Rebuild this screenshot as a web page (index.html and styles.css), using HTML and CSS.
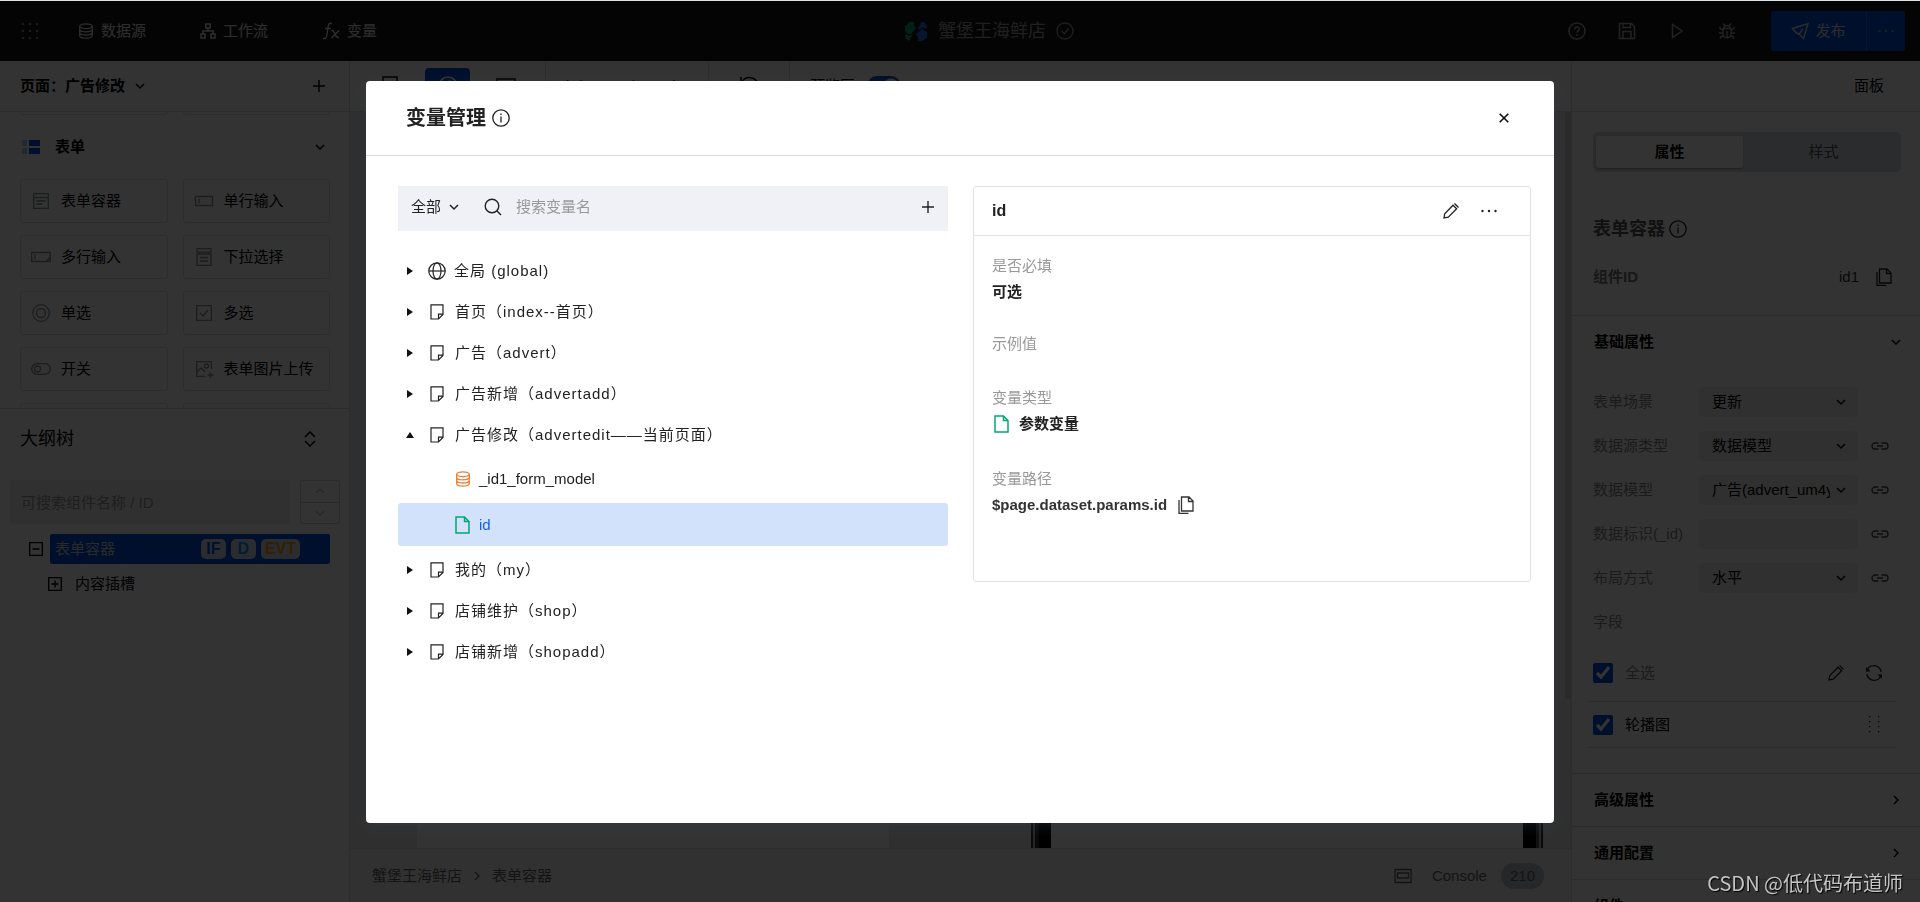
FILE: index.html
```html
<!DOCTYPE html>
<html lang="zh-CN">
<head>
<meta charset="utf-8">
<meta name="viewport" content="width=device-width, initial-scale=1">
<title>变量管理</title>
<link rel="stylesheet" href="styles.css">
</head>
<body>
<svg class="sprite" aria-hidden="true">
  <symbol id="grid" viewBox="0 0 18 18"><g fill="currentColor"><circle cx="2" cy="2" r="1.3"/><circle cx="9" cy="2" r="1.3"/><circle cx="16" cy="2" r="1.3"/><circle cx="2" cy="9" r="1.3"/><circle cx="9" cy="9" r="1.3"/><circle cx="16" cy="9" r="1.3"/><circle cx="2" cy="16" r="1.3"/><circle cx="9" cy="16" r="1.3"/><circle cx="16" cy="16" r="1.3"/></g></symbol>
  <symbol id="db" viewBox="0 0 16 16"><g fill="none" stroke="currentColor" stroke-width="1.3"><ellipse cx="8" cy="3.2" rx="6.3" ry="2.4"/><path d="M1.7 3.2v9.6c0 1.3 2.8 2.4 6.3 2.4s6.3-1.1 6.3-2.4V3.2M1.7 6.4c0 1.3 2.8 2.4 6.3 2.4s6.3-1.1 6.3-2.4M1.7 9.6c0 1.3 2.8 2.4 6.3 2.4s6.3-1.1 6.3-2.4"/></g></symbol>
  <symbol id="flow" viewBox="0 0 16 16"><g fill="none" stroke="currentColor" stroke-width="1.5"><path d="M5.8 1h4.4v4H5.8zM1 11h4v4H1zM11 11h4v4h-4zM8 5v3M3 11V8h10v3"/></g></symbol>
  <symbol id="fx" viewBox="0 0 18 18"><g fill="none" stroke="currentColor" stroke-width="1.4"><path d="M10 1.5C7.500 .5 6.600 2 6.300 4L4.700 14c-.3 2-1.500 3-3.700 2.300M3 6.500h6M9.500 8.500c2-.5 2.500 1 3.500 3.500s1.500 4 4 3.500M17 8.500l-7.500 7.500"/></g></symbol>
  <symbol id="check-circle" viewBox="0 0 18 18"><g fill="none" stroke="currentColor" stroke-width="1.3"><circle cx="9" cy="9" r="8"/><path d="M5.500 9l2.700 2.700L12.800 6.500"/></g></symbol>
  <symbol id="help" viewBox="0 0 18 18"><g fill="none" stroke="currentColor" stroke-width="1.5"><circle cx="9" cy="9" r="8"/><path d="M6.700 7.200c0-3 4.600-3 4.600-.2C11.300 8.800 9 8.800 9 10.800M9 12v1.700"/></g></symbol>
  <symbol id="save" viewBox="0 0 18 18"><g fill="none" stroke="currentColor" stroke-width="1.5"><path d="M1.500 1.500h12l3 3v12h-15zM5 1.500v4h7.500v-4M5 16.500V9.500h8v7"/></g></symbol>
  <symbol id="play" viewBox="0 0 18 18"><path d="M4.500 2.500v13L14 9z" fill="none" stroke="currentColor" stroke-width="1.5"/></symbol>
  <symbol id="bug" viewBox="0 0 18 18"><g fill="none" stroke="currentColor" stroke-width="1.4"><path d="M5 6.500h8v5.500c0 5-8 5-8 0zM6 6.500c0-4 6-4 6 0M9 9v7M6.500 3.500L5 1.500M11.500 3.500L13 1.500M5 8.500L2 6.500V4.500M13 8.500l3-2V4.500M5 11H1M13 11h4M5.500 13.500l-3 1.500v2M12.500 13.500l3 1.500v2"/></g></symbol>
  <symbol id="send" viewBox="0 0 18 18"><g fill="none" stroke="currentColor" stroke-width="1.4"><path d="M1.500 6.500L17 1.500 12.500 16.500 8.500 12.500 5.500 11zM8 12l4-5"/></g></symbol>
  <symbol id="dots" viewBox="0 0 18 18"><g fill="currentColor"><circle cx="2.500" cy="9" r="1.200"/><circle cx="9" cy="9" r="1.200"/><circle cx="15.500" cy="9" r="1.200"/></g></symbol>
  <symbol id="down" viewBox="0 0 10 10"><path d="M1 3l4 4 4-4" fill="none" stroke="currentColor" stroke-width="1.500"/></symbol>
  <symbol id="up" viewBox="0 0 10 10"><path d="M1 7l4-4 4 4" fill="none" stroke="currentColor" stroke-width="1.300"/></symbol>
  <symbol id="right" viewBox="0 0 10 10"><path d="M3 1l4 4-4 4" fill="none" stroke="currentColor" stroke-width="1.400"/></symbol>
  <symbol id="plus" viewBox="0 0 12 12"><path d="M6 0v12M0 6h12" fill="none" stroke="currentColor" stroke-width="1.400"/></symbol>
  <symbol id="form" viewBox="0 0 20 18"><g fill="none" stroke="currentColor" stroke-width="1.300"><path d="M2.700 1.700h14.600v14.600H2.700zM2.700 5.500h14.600M5.500 9h9M5.500 12h6"/></g></symbol>
  <symbol id="field" viewBox="0 0 20 18"><path d="M1.500 4.500h17v9h-17zM5 6.500v5" fill="none" stroke="currentColor" stroke-width="1.300"/></symbol>
  <symbol id="area" viewBox="0 0 20 18"><path d="M.7 4.500h18.600v9H.7zM4 6.500v5M19 9.500l-4 4h4z" fill="none" stroke="currentColor" stroke-width="1.300"/></symbol>
  <symbol id="select" viewBox="0 0 20 18"><path d="M3 .7h14v3.500H3zM3 6h14v11.300H3zM6 9.500h8M6 13h8" fill="none" stroke="currentColor" stroke-width="1.300"/></symbol>
  <symbol id="radio" viewBox="0 0 20 18"><g fill="none" stroke="currentColor" stroke-width="1.300"><circle cx="10" cy="9" r="8.300"/><circle cx="10" cy="9" r="4.500"/></g></symbol>
  <symbol id="checkbox" viewBox="0 0 20 18"><path d="M2.700 1.700h14.600v14.600H2.700zM6 9l3 3 5-6" fill="none" stroke="currentColor" stroke-width="1.300"/></symbol>
  <symbol id="toggle" viewBox="0 0 20 18"><g fill="none" stroke="currentColor" stroke-width="1.300"><rect x=".7" y="3.700" width="18.600" height="10.600" rx="5.300"/><circle cx="6.500" cy="9" r="3"/></g></symbol>
  <symbol id="image" viewBox="0 0 20 18"><g fill="none" stroke="currentColor" stroke-width="1.300"><path d="M17.300 9V1.700H2.700v14.600h8M3 12l4-4 4 4M16.500 12v6M13.500 15h6"/><circle cx="12.500" cy="6" r="2"/></g></symbol>
  <symbol id="updown" viewBox="0 0 12 16"><path d="M1 6l5-5 5 5M1 10l5 5 5-5" fill="none" stroke="currentColor" stroke-width="1.500"/></symbol>
  <symbol id="minus-box" viewBox="0 0 14 14"><path d="M.7.7h12.600v12.600H.7zM3.500 7h7" fill="none" stroke="currentColor" stroke-width="1.300"/></symbol>
  <symbol id="plus-box" viewBox="0 0 14 14"><path d="M.7.7h12.600v12.600H.7zM3.500 7h7M7 3.500v7" fill="none" stroke="currentColor" stroke-width="1.300"/></symbol>
  <symbol id="info" viewBox="0 0 18 18"><g fill="none" stroke="currentColor" stroke-width="1.300"><circle cx="9" cy="9" r="8.200"/><path d="M9 7.500v6M9 4.500v1.600"/></g></symbol>
  <symbol id="copy" viewBox="0 0 18 18"><path d="M4.500 1h7.500l4 4v10H4.500zM11.500 1v4.500H16M2 4v13.300h9.500" fill="none" stroke="currentColor" stroke-width="1.300"/></symbol>
  <symbol id="link" viewBox="0 0 18 18"><path d="M7.500 6H4a3 3 0 000 6h3.500M10.500 6H14a3 3 0 010 6h-3.500M6 9h6" fill="none" stroke="currentColor" stroke-width="1.300"/></symbol>
  <symbol id="edit" viewBox="0 0 18 18"><path d="M2 16l.7-4.300L11 3.200l3.600 3.600-8.300 8.400zM12.500 1.500l4 4" fill="none" stroke="currentColor" stroke-width="1.300"/></symbol>
  <symbol id="refresh" viewBox="0 0 18 18"><g fill="none" stroke="currentColor" stroke-width="1.300"><path d="M2 7.500C3.500-.2 14-.5 16.300 8M16 10.500C14.500 18.200 4 18.500 1.700 10"/><path d="M1 3V7.500H5.500zM17 15V10.500H12.500z" fill="currentColor" stroke="none"/></g></symbol>
  <symbol id="grip" viewBox="0 0 12 18"><g fill="currentColor"><path d="M1 0h1.300v1.300H1zM10 0h1.300v1.300H10zM1 5h1.300v1.300H1zM10 5h1.300v1.300H10zM1 10h1.300v1.300H1zM10 10h1.300v1.300H10zM1 15h1.300v1.300H1zM10 15h1.300v1.300H10z"/></g></symbol>
  <symbol id="search" viewBox="0 0 18 18"><g fill="none" stroke="currentColor" stroke-width="1.400"><circle cx="8" cy="8" r="6.800"/><path d="M12.800 12.800l4.200 4.200"/></g></symbol>
  <symbol id="close" viewBox="0 0 10 10"><path d="M.7.7l8.600 8.600M9.300.7L.7 9.300" fill="none" stroke="currentColor" stroke-width="1.600"/></symbol>
  <symbol id="globe" viewBox="0 0 18 18"><g fill="none" stroke="currentColor" stroke-width="1.200"><circle cx="9" cy="9" r="8.200"/><ellipse cx="9" cy="9" rx="4" ry="8.200"/><path d="M.8 9h16.400"/></g></symbol>
  <symbol id="page" viewBox="0 0 14 16"><path d="M1 .8h12v9.700L8.500 15H1zM13 10.200H8.500V15" fill="none" stroke="currentColor" stroke-width="1.200"/></symbol>
  <symbol id="file" viewBox="0 0 15 18"><path d="M1 1h8.500L14 5.500V17H1zM9.500 1v4.500H14" fill="none" stroke="currentColor" stroke-width="1.500"/></symbol>
  <symbol id="window" viewBox="0 0 18 16"><path d="M1 1.500h16v13H1zM3.500 5h11v5h-11z" fill="none" stroke="currentColor" stroke-width="1.300"/></symbol>
</svg>

<div class="app">
  <header class="topbar">
    <button class="plain apps" aria-label="应用"><svg class="i18"><use href="#grid"/></svg></button>
    <nav class="topnav">
      <a href="#"><svg class="i16"><use href="#db"/></svg>数据源</a>
      <a href="#"><svg class="i16"><use href="#flow"/></svg>工作流</a>
      <a href="#"><svg class="i18"><use href="#fx"/></svg>变量</a>
    </nav>
    <div class="app-name">
      <svg class="logo" viewBox="0 0 24 20"><path d="M1 5l5-4h4v4l2 2-5 6H4L1 10z" fill="#00a870"/><path d="M1 13l4 2 4-2-4 7-4-3z" fill="#00a870"/><path d="M14 7l4-6h2l3 4v3l-4-2-4 3z" fill="#266fe8"/><path d="M12 13l6-5 5 3v6l-5 3h-4v-4z" fill="#266fe8"/></svg>
      <span>蟹堡王海鲜店</span>
      <svg class="i18"><use href="#check-circle"/></svg>
    </div>
    <div class="actions">
      <button class="plain" aria-label="帮助"><svg class="i18"><use href="#help"/></svg></button>
      <button class="plain" aria-label="保存"><svg class="i18"><use href="#save"/></svg></button>
      <button class="plain" aria-label="预览"><svg class="i18"><use href="#play"/></svg></button>
      <button class="plain" aria-label="调试"><svg class="i18"><use href="#bug"/></svg></button>
      <div class="publish">
        <button class="publish-main"><svg class="i18"><use href="#send"/></svg>发布</button>
        <button class="publish-more" aria-label="更多"><svg class="i18"><use href="#dots"/></svg></button>
      </div>
    </div>
  </header>

  <div class="workspace">
    <aside class="left">
      <div class="page-head">
        <button class="plain strong">页面：广告修改<svg class="i10"><use href="#down"/></svg></button>
        <button class="plain" aria-label="新建页面"><svg class="i12"><use href="#plus"/></svg></button>
      </div>
      <section class="palette">
        <div class="stub-row"><i></i><i></i></div>
        <h2 class="palette-title">
          <svg class="i18" viewBox="0 0 18 18"><path d="M0 2h5v6H0zM0 10h5v6H0z" fill="#b5c7f0"/><path d="M7 2h11v6H7zM7 10h11v6H7z" fill="#0052d9"/></svg>
          表单<svg class="i10"><use href="#down"/></svg>
        </h2>
        <div class="cards">
          <button><svg class="i20"><use href="#form"/></svg>表单容器</button>
          <button><svg class="i20"><use href="#field"/></svg>单行输入</button>
          <button><svg class="i20"><use href="#area"/></svg>多行输入</button>
          <button><svg class="i20"><use href="#select"/></svg>下拉选择</button>
          <button><svg class="i20"><use href="#radio"/></svg>单选</button>
          <button><svg class="i20"><use href="#checkbox"/></svg>多选</button>
          <button><svg class="i20"><use href="#toggle"/></svg>开关</button>
          <button><svg class="i20"><use href="#image"/></svg>表单图片上传</button>
          <i></i><i></i>
        </div>
      </section>
      <section class="outline">
        <div class="outline-head"><h2>大纲树</h2><button class="plain" aria-label="展开"><svg class="updown"><use href="#updown"/></svg></button></div>
        <div class="outline-search">
          <input type="text" placeholder="可搜索组件名称 / ID" aria-label="可搜索组件名称 / ID">
          <div class="stepper"><button aria-label="上一个"><svg class="i10"><use href="#up"/></svg></button><button aria-label="下一个"><svg class="i10"><use href="#down"/></svg></button></div>
        </div>
        <div class="node">
          <svg class="i14"><use href="#minus-box"/></svg>
          <div class="node-body"><span>表单容器</span><span class="tags"><b class="tag-if">IF</b><b class="tag-d">D</b><b class="tag-evt">EVT</b></span></div>
        </div>
        <div class="node child"><svg class="i14"><use href="#plus-box"/></svg><span>内容插槽</span></div>
      </section>
    </aside>

    <main class="center">
      <div class="toolbar">
        <div class="devices">
          <button aria-label="手机"><svg class="device" viewBox="0 0 20 20"><rect x="3" y="1" width="14" height="18" fill="none" stroke="currentColor" stroke-width="1.500"/></svg></button>
          <button class="on" aria-label="小程序"><svg class="device" viewBox="0 0 20 20"><g fill="none" stroke="currentColor" stroke-width="1.500"><circle cx="10" cy="10" r="9"/><path d="M10 13V7c0-3 5-2 4 1"/></g></svg></button>
          <button aria-label="电脑"><svg class="device" viewBox="0 0 20 20"><rect x="1" y="3" width="18" height="12" fill="none" stroke="currentColor" stroke-width="1.500"/></svg></button>
        </div>
        <div class="zoom-level">iPhone 8 (100%)</div>
        <div class="reload"><svg class="device" viewBox="0 0 20 20"><path d="M2 6c4-7 14-5 16 2M1 1v6h6" fill="none" stroke="currentColor" stroke-width="1.500"/></svg></div>
        <div class="preview"><label for="preview">预览区</label><input id="preview" class="switch" type="checkbox" role="switch" checked></div>
      </div>
      <div class="canvas">
        <div class="artboard"></div>
        <div class="phone"><div class="screen"></div></div>
        <div class="scroll"></div>
      </div>
      <footer class="statusbar">
        <span>蟹堡王海鲜店</span><svg class="i10"><use href="#right"/></svg><span>表单容器</span>
        <div class="console"><svg class="win"><use href="#window"/></svg><span>Console</span><b>210</b></div>
      </footer>
    </main>

    <aside class="right">
      <div class="panel-head">面板</div>
      <div class="panel-top">
        <div class="tabs" role="tablist"><button class="on" role="tab">属性</button><button role="tab">样式</button></div>
        <h2>表单容器<svg class="i18"><use href="#info"/></svg></h2>
        <div class="cid"><span>组件ID</span><span class="cid-value">id1</span><svg class="i18"><use href="#copy"/></svg></div>
      </div>
      <h3 class="group">基础属性<svg class="i10"><use href="#down"/></svg></h3>
      <div class="props">
        <div class="prop"><label for="p1">表单场景</label><span class="pick"><select id="p1"><option>更新</option></select><svg class="i10"><use href="#down"/></svg></span></div>
        <div class="prop"><label for="p2">数据源类型</label><span class="pick"><select id="p2"><option>数据模型</option></select><svg class="i10"><use href="#down"/></svg></span><svg class="i18"><use href="#link"/></svg></div>
        <div class="prop"><label for="p3">数据模型</label><span class="pick"><select id="p3"><option>广告(advert_um4y)</option></select><svg class="i10"><use href="#down"/></svg></span><svg class="i18"><use href="#link"/></svg></div>
        <div class="prop"><label for="p4">数据标识(_id)</label><span class="pick"><input id="p4" type="text"></span><svg class="i18"><use href="#link"/></svg></div>
        <div class="prop"><label for="p5">布局方式</label><span class="pick"><select id="p5"><option>水平</option></select><svg class="i10"><use href="#down"/></svg></span><svg class="i18"><use href="#link"/></svg></div>
        <div class="prop"><span class="muted">字段</span></div>
      </div>
      <div class="fields">
        <div class="field-row all"><input type="checkbox" id="f0" checked><label for="f0">全选</label><svg class="i18"><use href="#edit"/></svg><svg class="i18"><use href="#refresh"/></svg></div>
        <div class="field-row"><input type="checkbox" id="f1" checked><label for="f1">轮播图</label><svg class="grip"><use href="#grip"/></svg></div>
      </div>
      <h3 class="group">高级属性<svg class="i10"><use href="#right"/></svg></h3>
      <h3 class="group">通用配置<svg class="i10"><use href="#right"/></svg></h3>
      <h3 class="group">组件</h3>
    </aside>
  </div>
</div>

<div class="backdrop">
  <div class="dialog" role="dialog" aria-modal="true" aria-labelledby="dialog-title">
    <div class="dialog-head">
      <h1 id="dialog-title">变量管理</h1><svg class="i18"><use href="#info"/></svg>
      <button class="plain close" aria-label="关闭"><svg class="i10"><use href="#close"/></svg></button>
    </div>
    <div class="dialog-body">
      <div class="variables">
        <div class="filter">
          <span class="scope"><select aria-label="范围"><option>全部</option></select><svg class="i10"><use href="#down"/></svg></span>
          <svg class="i18"><use href="#search"/></svg>
          <input type="text" placeholder="搜索变量名" aria-label="搜索变量名">
          <button class="plain" aria-label="新增变量"><svg class="i12"><use href="#plus"/></svg></button>
        </div>
        <ul class="tree">
          <li><button><i class="arrow"></i><svg class="i18"><use href="#globe"/></svg>全局 (global)</button></li>
          <li><button><i class="arrow"></i><svg class="page"><use href="#page"/></svg>首页（index--首页）</button></li>
          <li><button><i class="arrow"></i><svg class="page"><use href="#page"/></svg>广告（advert）</button></li>
          <li><button><i class="arrow"></i><svg class="page"><use href="#page"/></svg>广告新增（advertadd）</button></li>
          <li><button><i class="arrow open"></i><svg class="page"><use href="#page"/></svg>广告修改（advertedit——当前页面）</button>
            <ul>
              <li><button><svg class="i16 orange"><use href="#db"/></svg>_id1_form_model</button></li>
              <li><button class="selected"><svg class="file"><use href="#file"/></svg>id</button></li>
            </ul>
          </li>
          <li><button><i class="arrow"></i><svg class="page"><use href="#page"/></svg>我的（my）</button></li>
          <li><button><i class="arrow"></i><svg class="page"><use href="#page"/></svg>店铺维护（shop）</button></li>
          <li><button><i class="arrow"></i><svg class="page"><use href="#page"/></svg>店铺新增（shopadd）</button></li>
        </ul>
      </div>
      <section class="detail">
        <div class="detail-head"><h2>id</h2><button class="plain" aria-label="编辑"><svg class="i18"><use href="#edit"/></svg></button><button class="plain" aria-label="更多"><svg class="i18"><use href="#dots"/></svg></button></div>
        <dl>
          <div><dt>是否必填</dt><dd>可选</dd></div>
          <div><dt>示例值</dt><dd></dd></div>
          <div><dt>变量类型</dt><dd><svg class="file"><use href="#file"/></svg>参数变量</dd></div>
          <div><dt>变量路径</dt><dd class="path">$page.dataset.params.id<svg class="i18"><use href="#copy"/></svg></dd></div>
        </dl>
      </section>
    </div>
  </div>
</div>
<div class="credit">CSDN @低代码布道师</div>
</body>
</html>
```
FILE: styles.css
```css
* { box-sizing: border-box; }
html, body { height: 100%; }
body { margin: 0; overflow: hidden; background: #fff; color: #000; font: 15px/24px "Liberation Sans", "Noto Sans CJK SC", sans-serif; }
button, input, select { font: inherit; color: inherit; }
button { cursor: pointer; }
h1, h2, h3, dl, dd, ul { margin: 0; padding: 0; }
ul { list-style: none; }
svg { display: block; flex: none; }
input::placeholder { color: #999; opacity: 1; }
.sprite { display: none; }
.plain { display: flex; align-items: center; padding: 0; border: 0; background: none; }
.strong { font-weight: 700; }
.i10 { width: 10px; height: 10px; }
.i12 { width: 12px; height: 12px; }
.i14 { width: 14px; height: 14px; }
.i16 { width: 16px; height: 16px; }
.i18 { width: 18px; height: 18px; }
.i20 { width: 20px; height: 18px; }

.app { display: flex; flex-direction: column; height: 100vh; border-top: 1px solid #dfe3e3; }

/* Top bar */
.topbar { display: grid; grid-template-columns: 1fr auto 1fr; align-items: center; flex: none; height: 60px; padding: 0 15px 0 21px; background: #181818; color: #fff; grid-template-areas: "nav name actions"; }
.apps { grid-area: nav; justify-self: start; color: #888; }
.topnav { grid-area: nav; display: flex; gap: 54px; margin-left: 57px; }
.topnav a { display: flex; align-items: center; gap: 7px; color: #e2e2e2; text-decoration: none; }
.app-name { grid-area: name; display: flex; align-items: center; gap: 10px; margin-left: 52px; font-size: 18px; color: #999; }
.logo { width: 24px; height: 20px; }
.actions { grid-area: actions; display: flex; align-items: center; justify-content: flex-end; gap: 32px; color: #aaa; }
.publish { display: flex; height: 40px; margin-left: 3px; border-radius: 3px; overflow: hidden; }
.publish button { display: flex; align-items: center; justify-content: center; gap: 6px; border: 0; background: #0052d9; color: #ddd; }
.publish-main { width: 95px; }
.publish .publish-more { width: 39px; border-left: 1px solid #2a6ee8; color: #999; }

.workspace { display: grid; grid-template-columns: 349px minmax(0, 1fr) 349px; flex: 1; min-height: 0; }

/* Component palette and outline */
.left { display: flex; flex-direction: column; min-height: 0; }
.page-head { display: flex; align-items: center; justify-content: space-between; height: 51px; padding: 0 24px 0 20px; border-bottom: 1px solid #dcdcdc; }
.page-head .plain { gap: 10px; }
.palette { height: 297px; overflow: hidden; padding: 0 19px 0 20px; border-bottom: 1px solid #d0d0d0; }
.stub-row, .cards { display: grid; grid-template-columns: 1fr 1fr; gap: 12px 15px; }
.stub-row i { height: 3px; border: solid #dcdcdc; border-width: 0 1px 1px; border-radius: 0 0 3px 3px; }
.palette-title { display: flex; align-items: center; gap: 15px; height: 64px; padding: 0 5px 0 2px; font-size: 15px; }
.palette-title .i10 { margin-left: auto; }
.cards button, .cards i { display: flex; align-items: center; gap: 10px; height: 44px; padding: 0 10px; border: 1px solid #dcdcdc; border-radius: 3px; background: none; white-space: nowrap; }
.cards svg { color: #8a8f99; }
.outline-head { display: flex; align-items: center; justify-content: space-between; height: 60px; padding: 0 33px 0 20px; }
.outline-head h2 { font-size: 18px; font-weight: 400; }
.updown { width: 12px; height: 16px; }
.outline-search { display: flex; gap: 10px; padding: 11px 9px 0 10px; }
.outline-search input { flex: 1; min-width: 0; height: 44px; padding: 0 11px; border: 0; border-radius: 4px; background: #eee; }
.stepper { display: grid; width: 40px; border: 1px solid #d0d0d0; border-radius: 2px; color: #c4c4c4; }
.stepper button { display: grid; place-items: center; padding: 0; border: 0; background: none; }
.stepper button + button { border-top: 1px solid #d0d0d0; }
.node { display: flex; align-items: center; gap: 7px; height: 30px; margin-top: 10px; padding: 0 19px 0 29px; }
.node-body { display: flex; flex: 1; align-items: center; justify-content: space-between; height: 30px; padding: 0 30px 0 5px; border-radius: 2px; background: #0052d9; color: #ccc; }
.tags { display: flex; gap: 5px; }
.tags b { min-width: 25px; padding: 0 4px; border-radius: 5px; background: #d8dde8; font-size: 16px; line-height: 20px; text-align: center; }
.tag-if { color: #0052d9; }
.tag-d { color: #0594fa; }
.tag-evt { color: #ff9d00; }
.child { gap: 13px; margin-top: 5px; padding-left: 48px; }

/* Canvas */
.center { display: flex; flex-direction: column; min-width: 0; border-left: 1px solid #dcdcdc; }
.toolbar { display: flex; flex: none; height: 51px; border-bottom: 1px solid #dcdcdc; }
.toolbar > div { display: flex; align-items: center; border-right: 1px solid #dcdcdc; }
.toolbar .preview { border: 0; gap: 12px; padding-left: 20px; }
.devices { gap: 13px; width: 196px; padding-left: 17px; }
.devices button { display: grid; place-items: center; width: 45px; height: 36px; padding: 0; border: 0; border-radius: 4px; background: none; }
.devices .on { background: #0052d9; color: #fff; }
.device { width: 20px; height: 20px; }
.zoom-level { width: 163px; padding-left: 20px; }
.reload { width: 81px; padding-left: 31px; }
.switch { appearance: none; width: 34px; height: 20px; margin: 0; border-radius: 10px; background: radial-gradient(circle at 24px 10px, #fff 7px, #0052d9 8px); }
.canvas { display: flex; flex: 1; min-height: 0; padding-left: 67px; background: #e8e8ea; }
.artboard { width: 472px; background: #fff; }
.phone { width: 512px; margin-left: 142px; padding: 0 20px; background: linear-gradient(90deg, #333 0 2px, #bbb 2px 4px, #333 4px 8px, #000 8px 20px, #fff 20px 492px, #000 492px 505px, #555 505px 508px, #bbb 508px 510px, #333 510px); }
.screen { height: 100%; background: #fff; }
.scroll { width: 6px; height: 587px; margin-left: auto; border-radius: 3px; background: #cfcfcf; }
.statusbar { display: flex; flex: none; align-items: center; gap: 10px; height: 54px; padding: 0 27px 0 22px; border-top: 1px solid #dcdcdc; background: #f5f5f5; color: #666; }
.console { display: flex; align-items: center; gap: 14px; margin-left: auto; }
.console span { margin-left: 6px; }
.console b { padding: 0 9px; border-radius: 13px; background: #bcc0cc; font-weight: 400; line-height: 26px; }
.win { width: 18px; height: 16px; }

/* Property panel */
.right { min-width: 0; overflow: hidden; border-left: 1px solid #dcdcdc; }
.panel-head { height: 51px; padding-right: 36px; border-bottom: 1px solid #dcdcdc; line-height: 50px; text-align: right; }
.panel-top { height: 203px; padding: 20px 19px 0 21px; }
.tabs { display: grid; grid-template-columns: 147px 1fr; height: 40px; padding: 4px 3px; border-radius: 5px; background: #d8dce2; }
.tabs button { padding: 0 0 0 6px; border: 0; border-radius: 3px; background: none; color: #555; }
.tabs .on { background: #fff; padding: 0; color: #000; font-weight: 700; box-shadow: 0 1px 2px #999; }
.panel-top h2 { display: flex; align-items: center; gap: 4px; height: 26px; margin-top: 44px; font-size: 18px; color: #555; }
.panel-top svg { color: #222; }
.cid { display: flex; align-items: center; gap: 16px; margin-top: 23px; padding-right: 8px; color: #777; font-weight: 700; }
.cid-value { margin-left: auto; color: #333; font-weight: 400; }
.group { display: flex; align-items: center; justify-content: space-between; height: 53px; padding: 0 19px 0 22px; border-top: 1px solid #d8d8d8; font-size: 15px; }
.props { padding: 12px 31px 0 21px; }
.prop { display: flex; align-items: center; height: 44px; color: #888; }
.prop label { width: 106px; white-space: nowrap; }
.prop > svg { margin-left: 13px; color: #444; }
.pick { position: relative; width: 159px; color: #000; }
.pick select, .pick input { display: block; appearance: none; width: 100%; height: 30px; padding: 0 28px 0 13px; border: 0; border-radius: 4px; background: #f0f0f0; text-overflow: clip; }
.pick svg { position: absolute; right: 12px; top: 10px; pointer-events: none; }
.fields { margin: 0 24px 25px 15px; }
.field-row { display: flex; align-items: center; gap: 12px; height: 46px; padding: 0 16px 0 6px; border-bottom: 1px solid #d8d8d8; }
.field-row.all { height: 58px; padding: 0 13px 0 6px; color: #888; }
.field-row svg { color: #222; }
.field-row.all svg + svg { margin-left: 8px; }
.field-row label { margin-right: auto; }
.field-row input { width: 20px; height: 20px; margin: 0; accent-color: #0052d9; }
.grip { width: 12px; height: 18px; }

/* Dialog */
.backdrop { position: fixed; inset: 1px 0 0; display: flex; align-items: flex-start; justify-content: center; padding: 80px 16px 78px; background: rgba(0, 0, 0, .8); }
.dialog { display: flex; flex-direction: column; width: 1188px; max-width: 100%; height: 100%; max-height: 742px; border-radius: 4px; background: #fff; color: #222; box-shadow: 0 4px 12px rgba(60, 70, 85, .3); }
.dialog-head { display: flex; flex: none; align-items: center; gap: 6px; height: 75px; padding: 0 45px 0 40px; border-bottom: 1px solid #d6dae6; }
.dialog-head h1 { font-size: 20px; }
.close { margin-left: auto; color: #111; }
.dialog-body { display: grid; grid-template-columns: minmax(0, 550fr) minmax(0, 558fr); gap: 25px; align-items: start; padding: 30px 23px 30px 32px; overflow: auto; }
.filter { display: flex; align-items: center; height: 45px; padding: 0 14px 4px 13px; background: #f0f1f6; }
.scope { display: flex; align-items: center; gap: 7px; margin-right: 25px; }
.scope select { appearance: none; padding: 0; border: 0; background: none; }
.filter input { flex: 1; min-width: 0; margin-left: 14px; padding: 0; border: 0; background: none; }
.tree { padding-top: 19px; }
.tree button { display: flex; align-items: center; width: 100%; height: 41px; padding: 0 8px; border: 0; border-radius: 3px; background: none; white-space: nowrap; letter-spacing: 1px; }
.tree svg { margin-right: 8px; }
.arrow { width: 0; height: 0; margin: 0 15px 0 1px; border: solid transparent; border-width: 4px 0 4px 6px; border-left-color: #111; }
.arrow.open { margin: 0 14px 0 0; border-width: 0 4px 6px; border-left-color: transparent; border-bottom-color: #111; }
.tree .page { width: 14px; height: 16px; margin: 0 11px 0 2px; }
.tree ul { display: grid; gap: 3px; padding: 2px 0 3px; }
.tree ul button { height: 43px; padding: 0 57px; letter-spacing: normal; }
.tree ul .orange { color: #ed7b2f; }
.tree ul .file { margin-right: 9px; }
.file { width: 15px; height: 18px; color: #00a870; }
.tree .selected { background: #d3e2fb; color: #1a5fe0; }
.detail { min-height: 396px; border: 1px solid #e2e3e8; border-radius: 3px; }
.detail-head { display: flex; align-items: center; gap: 20px; height: 49px; padding: 0 32px 0 18px; border-bottom: 1px solid #e2e3e8; }
.detail-head h2 { margin-right: auto; font-size: 16px; }
.detail dl { display: grid; padding: 18px 18px 16px; }
.detail dl div { height: 81px; }
.detail dl div:nth-child(-n+2) { height: 78px; }
.detail dl div:nth-child(2) { height: 54px; }
.detail dt { height: 26px; color: #999; }
.detail dd { display: flex; align-items: center; gap: 10px; font-weight: 700; }
.detail .file { margin-left: 2px; }
.path { color: #333; }

.credit { position: fixed; right: 17px; bottom: 7px; color: #c4c4c4; font: 20px/24px "Noto Sans CJK SC", sans-serif; text-shadow: 1px 1px 1px #000; }
```
